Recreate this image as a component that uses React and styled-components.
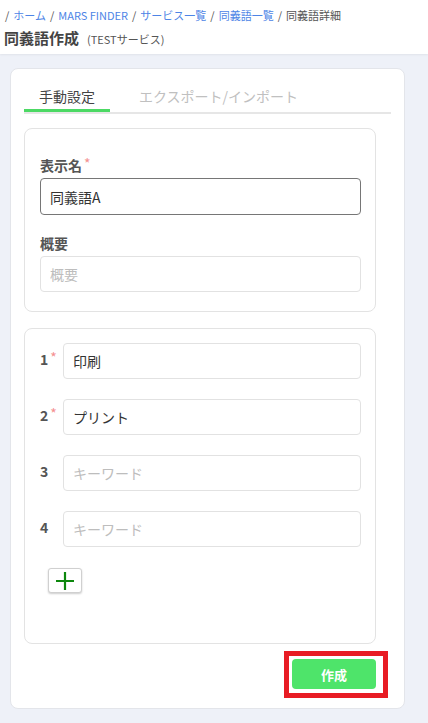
import React, { useState } from "react";
import styled, { createGlobalStyle } from "styled-components";

const GlobalStyle = createGlobalStyle`
  body {
    margin: 0;
    background: #eef1f8;
    font-family: "Noto Sans CJK JP", "Noto Sans", sans-serif;
    color: #444;
  }
  * { box-sizing: border-box; }
`;

const crumbs = [
  { label: "ホーム", link: true },
  { label: "MARS FINDER", link: true },
  { label: "サービス一覧", link: true },
  { label: "同義語一覧", link: true },
  { label: "同義語詳細", link: false },
];

export default function App() {
  const [tab, setTab] = useState(0);
  const [keywords, setKeywords] = useState(["印刷", "プリント", "", ""]);

  return (
    <>
      <GlobalStyle />
      <Header>
        <Breadcrumb>
          {crumbs.map((c) => (
            <React.Fragment key={c.label}>
              <Slash>/</Slash>
              {c.link ? <CrumbLink>{c.label}</CrumbLink> : <Crumb>{c.label}</Crumb>}
            </React.Fragment>
          ))}
        </Breadcrumb>
        <TitleRow>
          <Title>同義語作成</Title>
          <SubTitle>(TESTサービス)</SubTitle>
        </TitleRow>
      </Header>

      <Main>
        <Card>
          <Tabs>
            <Tab active={tab === 0} onClick={() => setTab(0)}>
              手動設定
            </Tab>
            <Tab active={tab === 1} onClick={() => setTab(1)}>
              エクスポート/インポート
            </Tab>
          </Tabs>

          <Panel>
            <Label>
              表示名<Req>*</Req>
            </Label>
            <Input focused defaultValue="同義語A" />
            <Label spaced>概要</Label>
            <Input placeholder="概要" />
          </Panel>

          <Panel list>
            {keywords.map((k, i) => (
              <KeywordRow key={i}>
                <Num>
                  {i + 1}
                  {i < 2 && <Req>*</Req>}
                </Num>
                <Input
                  value={k}
                  placeholder="キーワード"
                  onChange={(e) => {
                    const next = [...keywords];
                    next[i] = e.target.value;
                    setKeywords(next);
                  }}
                />
              </KeywordRow>
            ))}
            <AddButton onClick={() => setKeywords([...keywords, ""])}>
              <svg width="20" height="20" viewBox="0 0 20 20">
                <path d="M10 1v18M1 10h18" stroke="#0d870d" strokeWidth="2.2" />
              </svg>
            </AddButton>
          </Panel>

          <Footer>
            <Highlight>
              <SubmitButton>作成</SubmitButton>
            </Highlight>
          </Footer>
        </Card>
      </Main>
    </>
  );
}

// Header //
const Header = styled.header`
  background: #fff;
  height: 54px;
  padding: 6px 5px 0;
  box-shadow: 0 1px 2px rgba(0, 0, 0, 0.06);
`;
const Breadcrumb = styled.div`
  font-size: 11px;
  line-height: 18px;
  display: flex;
  flex-wrap: wrap;
`;
const Slash = styled.span`
  color: #555;
  margin-right: 4px;
  & + * {
    margin-right: 4px;
  }
`;
const CrumbLink = styled.a`
  color: #4d84e6;
  cursor: pointer;
`;
const Crumb = styled.span`
  color: #555;
`;
const TitleRow = styled.div`
  display: flex;
  align-items: baseline;
  gap: 8px;
  margin-top: 2px;
`;
const Title = styled.h1`
  margin: 0;
  font-size: 15px;
  line-height: 24px;
  font-weight: 700;
  color: #444;
  margin-left: -1px;
`;
const SubTitle = styled.span`
  font-size: 11px;
  color: #555;
`;
/////////////////

// Card //
const Main = styled.main`
  padding: 14px 23px 0 10px;
`;
const Card = styled.section`
  background: #fff;
  border: 1px solid #e3e5ea;
  border-radius: 8px;
  padding: 17px 13px 10px 13px;
`;
const Tabs = styled.div`
  display: flex;
  gap: 14px;
  border-bottom: 2px solid #e6e6e6;
`;
const Tab = styled.button`
  border: none;
  background: none;
  font-family: inherit;
  font-size: 14px;
  line-height: 20px;
  padding: 0 15px 6px;
  cursor: pointer;
  color: ${(p) => (p.active ? "#444" : "#c0c0c0")};
  box-shadow: ${(p) => (p.active ? "inset 0 -3px 0 #4cd964" : "none")};
`;
const Panel = styled.div`
  margin: ${(p) => (p.list ? "16px" : "14px")} 15px 0 0;
  border: 1px solid #e3e3e3;
  border-radius: 8px;
  padding: ${(p) => (p.list ? "14px 14px 50px 15px" : "26px 14px 19px 15px")};
  display: flex;
  flex-direction: column;
`;
const Label = styled.label`
  font-size: 14px;
  line-height: 20px;
  font-weight: 700;
  color: #555;
  margin-top: ${(p) => (p.spaced ? "18px" : "0")};
  margin-bottom: 3px;
`;
const Req = styled.span`
  color: #f4908f;
  font-size: 14px;
  font-weight: 400;
  vertical-align: top;
  margin-left: 2px;
  line-height: 16px;
`;
const Input = styled.input`
  width: 100%;
  height: ${(p) => (p.focused ? "37px" : "36px")};
  border: 1px solid ${(p) => (p.focused ? "#767676" : "#e2e2e2")};
  border-radius: 4px;
  padding: 0 9px;
  font-family: inherit;
  font-size: 14px;
  color: #333;
  outline: none;
  &::placeholder {
    color: #bdbdbd;
  }
`;
const KeywordRow = styled.div`
  display: flex;
  align-items: flex-start;
  margin-bottom: 20px;
`;
const Num = styled.div`
  width: 23px;
  flex: none;
  padding-top: 6px;
  font-size: 14px;
  font-weight: 700;
  color: #555;
  line-height: 20px;
`;
const AddButton = styled.button`
  align-self: flex-start;
  margin: 1px 0 0 8px;
  width: 34px;
  height: 25px;
  border: 1px solid #d0d0d0;
  border-radius: 3px;
  background: #fff;
  box-shadow: 0 1px 2px rgba(0, 0, 0, 0.2);
  display: flex;
  align-items: center;
  justify-content: center;
  padding: 0;
  cursor: pointer;
`;
const Footer = styled.div`
  display: flex;
  justify-content: flex-end;
  margin-top: 7px;
  padding-right: 3px;
`;
const Highlight = styled.div`
  border: 5px solid #e81c24;
  padding: 3px 7px 4px 3px;
`;
const SubmitButton = styled.button`
  width: 84px;
  height: 30px;
  border: none;
  border-radius: 4px;
  background: #4ee46a;
  color: #fff;
  font-family: inherit;
  font-weight: 700;
  font-size: 13px;
  cursor: pointer;
  display: block;
`;
